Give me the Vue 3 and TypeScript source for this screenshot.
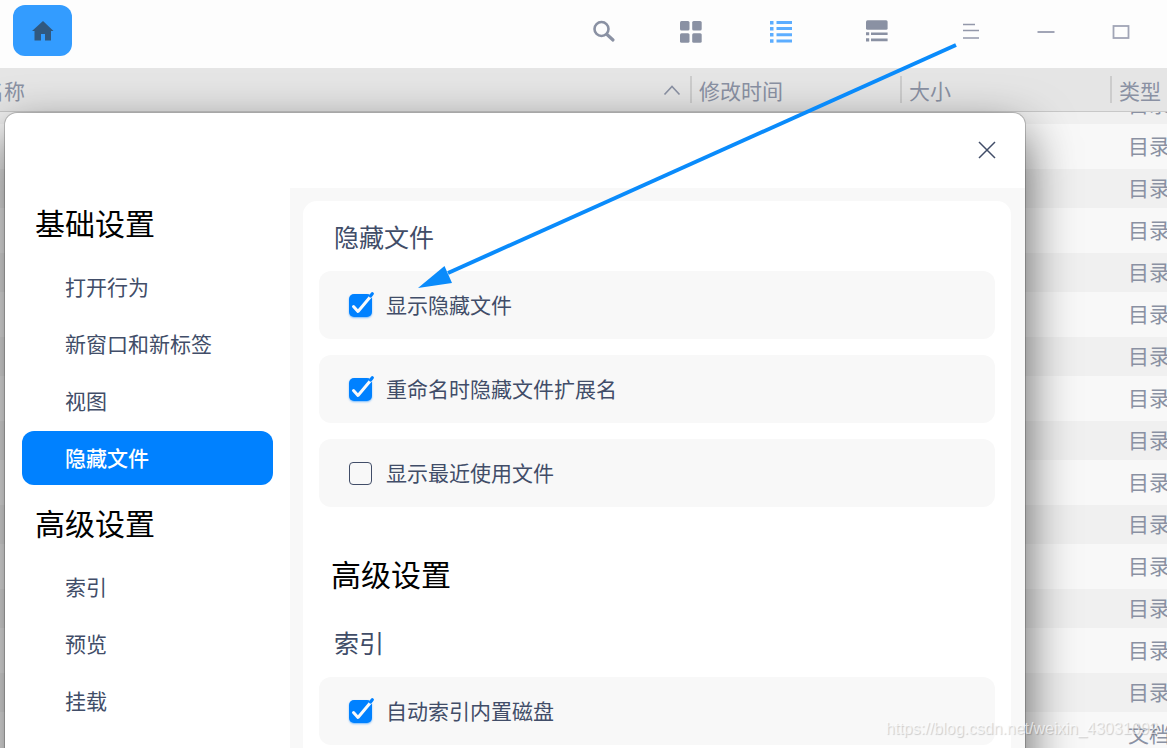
<script setup lang="ts">
import { reactive, ref } from 'vue'

interface Option {
  id: string
  label: string
  checked: boolean
}

const columns = ['修改时间', '大小', '类型']
const rows: string[] = [...Array(15).fill('目录'), '文档']

const navGroups = [
  { title: '基础设置', items: ['打开行为', '新窗口和新标签', '视图', '隐藏文件'] },
  { title: '高级设置', items: ['索引', '预览', '挂载'] },
]
const active = ref('隐藏文件')

const hiddenOptions = reactive<Option[]>([
  { id: 'show-hidden', label: '显示隐藏文件', checked: true },
  { id: 'hide-ext', label: '重命名时隐藏文件扩展名', checked: true },
  { id: 'show-recent', label: '显示最近使用文件', checked: false },
])
const indexOptions = reactive<Option[]>([
  { id: 'index-internal', label: '自动索引内置磁盘', checked: true },
])
const sections = [
  { group: '', title: '隐藏文件', options: hiddenOptions },
  { group: '高级设置', title: '索引', options: indexOptions },
]
</script>

<template>
  <div class="window">
    <header class="toolbar">
      <button class="home" aria-label="主目录">
        <svg width="22" height="20" viewBox="0 0 22 20"><path d="M11 0L21.500 10H19V19.500H13V13H9V19.500H2.500V10H0Z" fill="#30587f" /></svg>
      </button>
      <div class="views">
        <button class="search" aria-label="搜索">
          <svg width="24" height="24" viewBox="0 0 24 24" fill="none" stroke="#8a91a3"><circle cx="9.500" cy="9" r="7" stroke-width="2.600" /><path d="M15 14.500L21 20" stroke-width="3.200" stroke-linecap="round" /></svg>
        </button>
        <button aria-label="图标视图">
          <svg width="22" height="22" viewBox="0 0 22 22" fill="#8a91a3"><rect width="9.500" height="9.500" rx="1.500" /><rect x="12.200" width="9.500" height="9.500" rx="1.500" /><rect y="12.200" width="9.500" height="9.500" rx="1.500" /><rect x="12.200" y="12.200" width="9.500" height="9.500" rx="1.500" /></svg>
        </button>
        <button aria-label="列表视图">
          <svg width="22" height="22" viewBox="0 0 22 22" fill="#5cadff"><path d="M0 0h3.500v3.500H0zM6.500 0h15.500v3H6.500zM0 6h3.500v3.500H0zM6.500 6h15.500v3H6.500zM0 12h3.500v3.500H0zM6.500 12.200h15.500v3H6.500zM0 18.200h3.500v3.500H0zM6.500 18.500h15.500v3H6.500z" /></svg>
        </button>
        <button class="detail" aria-label="分栏视图">
          <svg width="22" height="24" viewBox="0 0 22 24" fill="#8a91a3"><rect y="0.300" width="21.600" height="9.500" rx="1.500" /><path d="M0 12.300h3.200v3H0zM5 12.500h16.600v2.600H5zM0 18.200h3.200v3.300H0zM5 18.600h16.600v2.600H5z" /></svg>
        </button>
      </div>
      <div class="controls">
        <button aria-label="菜单">
          <svg width="16" height="18" viewBox="0 0 16 18" fill="none" stroke="#9398aa" stroke-width="1.500"><path d="M0 1.500h12M0 7.500h16M0 15h16" /></svg>
        </button>
        <button aria-label="最小化">
          <svg width="18" height="16" viewBox="0 0 18 16"><path d="M0.500 8h17" stroke="#a1a5b6" stroke-width="2" /></svg>
        </button>
        <button aria-label="最大化">
          <svg width="18" height="16" viewBox="0 0 18 16"><rect x="1.500" y="2" width="15" height="12" fill="none" stroke="#a1a5b6" stroke-width="1.800" /></svg>
        </button>
      </div>
    </header>

    <main class="files">
      <table class="head">
        <thead>
          <tr>
            <th scope="col">
              <div class="col name">
                名称
                <svg width="18" height="12" viewBox="0 0 18 12"><path d="M1.500 10.500L9 2.500L16.500 10.500" fill="none" stroke="#8a91a3" stroke-width="1.600" /></svg>
              </div>
            </th>
            <th v-for="c in columns" :key="c" scope="col"><div class="col">{{ c }}</div></th>
          </tr>
        </thead>
      </table>
      <div class="scroll">
        <table class="list">
          <tbody>
            <tr v-for="(type, i) in rows" :key="i">
              <td></td>
              <td></td>
              <td></td>
              <td>{{ type }}</td>
            </tr>
          </tbody>
        </table>
      </div>
    </main>

    <section class="dialog" role="dialog" aria-label="设置">
      <div class="titlebar">
        <button aria-label="关闭">
          <svg width="18" height="18" viewBox="0 0 18 18"><path d="M1 1L17 17M17 1L1 17" stroke="#414d68" stroke-width="1.500" /></svg>
        </button>
      </div>
      <div class="body">
        <nav>
          <template v-for="g in navGroups" :key="g.title">
            <h2>{{ g.title }}</h2>
            <ul>
              <li v-for="item in g.items" :key="item">
                <button :class="{ active: item === active }" @click="active = item">{{ item }}</button>
              </li>
            </ul>
          </template>
        </nav>
        <div class="content">
          <div class="panel">
            <template v-for="s in sections" :key="s.title">
              <h2 v-if="s.group">{{ s.group }}</h2>
              <h3>{{ s.title }}</h3>
              <div class="options">
                <label v-for="o in s.options" :key="o.id" :for="o.id" class="card">
                  <span class="check">
                    <input :id="o.id" v-model="o.checked" type="checkbox" />
                    <svg v-if="o.checked" width="30" height="30" viewBox="-3 -4 30 30" fill="none" stroke-linecap="round" stroke-linejoin="round">
                      <path d="M4.500 12.500L9 17.500L22 2" stroke="#fafafa" stroke-width="3" />
                      <path d="M21.500 2L23.300 -0.200" stroke="#0081ff" stroke-width="3.200" />
                    </svg>
                  </span>
                  <span class="text">{{ o.label }}</span>
                </label>
              </div>
            </template>
          </div>
        </div>
      </div>
    </section>

    <svg class="arrow" width="540" height="246" viewBox="0 0 540 246" aria-hidden="true">
      <path d="M538 2L30 230" stroke="#0a8bfb" stroke-width="4" />
      <path d="M0 245L26.500 223L34 240Z" fill="#0a8bfb" />
    </svg>
    <div class="watermark">https://blog.csdn.net/weixin_43031092</div>
  </div>
</template>

<style>
body {
  margin: 0;
}
</style>

<style scoped>
.window {
  position: relative;
  display: flex;
  flex-direction: column;
  height: 100vh;
  overflow: hidden;
  background: #f8f8f8;
  color: #414d68;
  font: 21px/30px "Noto Sans CJK SC", sans-serif;
}
button {
  display: flex;
  align-items: center;
  justify-content: center;
  padding: 0;
  border: 0;
  background: none;
  color: inherit;
  font: inherit;
  cursor: pointer;
}
h2, h3, ul {
  margin: 0;
  padding: 0;
  font-weight: 400;
}
.toolbar {
  display: flex;
  flex: none;
  box-sizing: border-box;
  height: 68px;
  padding: 5px 9px 5px 13px;
  background: #fdfdfd;
}
.home {
  width: 59px;
  height: 51px;
  border-radius: 12px;
  background: #339cff;
}
.views {
  display: flex;
  margin-left: auto;
}
.views button {
  width: 90px;
  height: 54px;
}
.views .search {
  width: 84px;
}
.views .detail {
  width: 102px;
}
.controls {
  display: flex;
  margin-left: 5px;
}
.controls button {
  width: 75px;
  height: 54px;
}
.files {
  display: flex;
  flex: 1;
  flex-direction: column;
  min-height: 0;
}
table {
  width: calc(100% + 26px);
  margin-left: -26px;
  table-layout: fixed;
  border-collapse: collapse;
  color: #8a91a3;
}
th, td {
  width: 210px;
  padding: 0;
  overflow: hidden;
  font-weight: 400;
  text-align: left;
  white-space: nowrap;
}
th:first-child, td:first-child {
  width: auto;
}
th:last-child, td:last-child {
  width: 57px;
}
.head {
  flex: none;
  background: #e5e5e5;
}
.head th {
  height: 43px;
  border-bottom: 1px solid #c8c8c8;
}
.col {
  display: flex;
  align-items: center;
  height: 27px;
  padding-left: 7px;
  border-left: 2px solid #cccccc;
}
.name {
  justify-content: space-between;
  padding-right: 9px;
}
.scroll {
  flex: 1;
  overflow: hidden;
}
.list {
  margin-top: -27px;
}
.list tr {
  height: 45px;
  background: #f8f8f8;
}
.list tr:nth-child(odd) {
  height: 39px;
  background: #f0f0f0;
}
.list td {
  box-sizing: border-box;
  padding-bottom: 4px;
}
.list td:last-child {
  padding-left: 18px;
}
.dialog {
  position: absolute;
  top: 113px;
  right: 142px;
  bottom: -70px;
  left: 5px;
  display: flex;
  flex-direction: column;
  overflow: hidden;
  border-radius: 12px;
  background: #fff;
  box-shadow: 0 0 0 1px rgba(0, 0, 0, 0.2), 0 20px 50px rgba(0, 0, 0, 0.65);
}
.titlebar {
  display: flex;
  flex: none;
  justify-content: flex-end;
  height: 75px;
}
.titlebar button {
  width: 76px;
  height: 74px;
}
.body {
  display: flex;
  flex: 1;
  min-height: 0;
}
nav {
  flex: none;
  box-sizing: border-box;
  width: 285px;
  padding: 0 17px;
}
h2 {
  padding: 0 0 4px 13px;
  color: #000;
  font-size: 30px;
  line-height: 68px;
}
ul {
  display: grid;
  gap: 3px;
  margin-bottom: 3px;
  list-style: none;
}
nav button {
  justify-content: flex-start;
  width: 100%;
  height: 54px;
  padding: 0 0 2px 43px;
  border-radius: 12px;
}
nav .active {
  background: #0081ff;
  color: #fff;
  font-weight: 500;
}
.content {
  flex: 1;
  padding: 13px 14px 0 13px;
  background: #f8f8f8;
}
.panel {
  box-sizing: border-box;
  height: 100%;
  padding: 4px 16px 0;
  border-radius: 14px;
  background: #fff;
}
h3 {
  padding: 0 0 4px 15px;
  font-size: 25px;
  line-height: 62px;
}
.panel h2 {
  margin-top: 32px;
  padding-left: 12px;
}
.options {
  display: grid;
  gap: 16px;
}
.card {
  display: flex;
  align-items: center;
  gap: 14px;
  height: 68px;
  padding-left: 30px;
  border-radius: 12px;
  background: #f8f8f8;
}
.text {
  padding-bottom: 2px;
}
.check {
  position: relative;
  display: flex;
}
.check input {
  box-sizing: border-box;
  width: 23px;
  height: 23px;
  margin: 0;
  appearance: none;
  border: 1px solid #414d68;
  border-radius: 4px;
}
.check input:checked {
  border: 0;
  border-radius: 5px;
  background: #0081ff;
  box-shadow: 0 1px 2px rgba(0, 129, 255, 0.5);
}
.check svg {
  position: absolute;
  top: -4px;
  left: -3px;
  pointer-events: none;
}
.arrow {
  position: absolute;
  top: 43px;
  left: 418px;
  pointer-events: none;
}
.watermark {
  position: absolute;
  right: 9px;
  bottom: 9px;
  color: rgba(255, 255, 255, 0.65);
  font: 16px/20px "Liberation Sans", Arial, sans-serif;
  text-shadow: 1px 1px 1px rgba(0, 0, 0, 0.18);
  pointer-events: none;
}
</style>
